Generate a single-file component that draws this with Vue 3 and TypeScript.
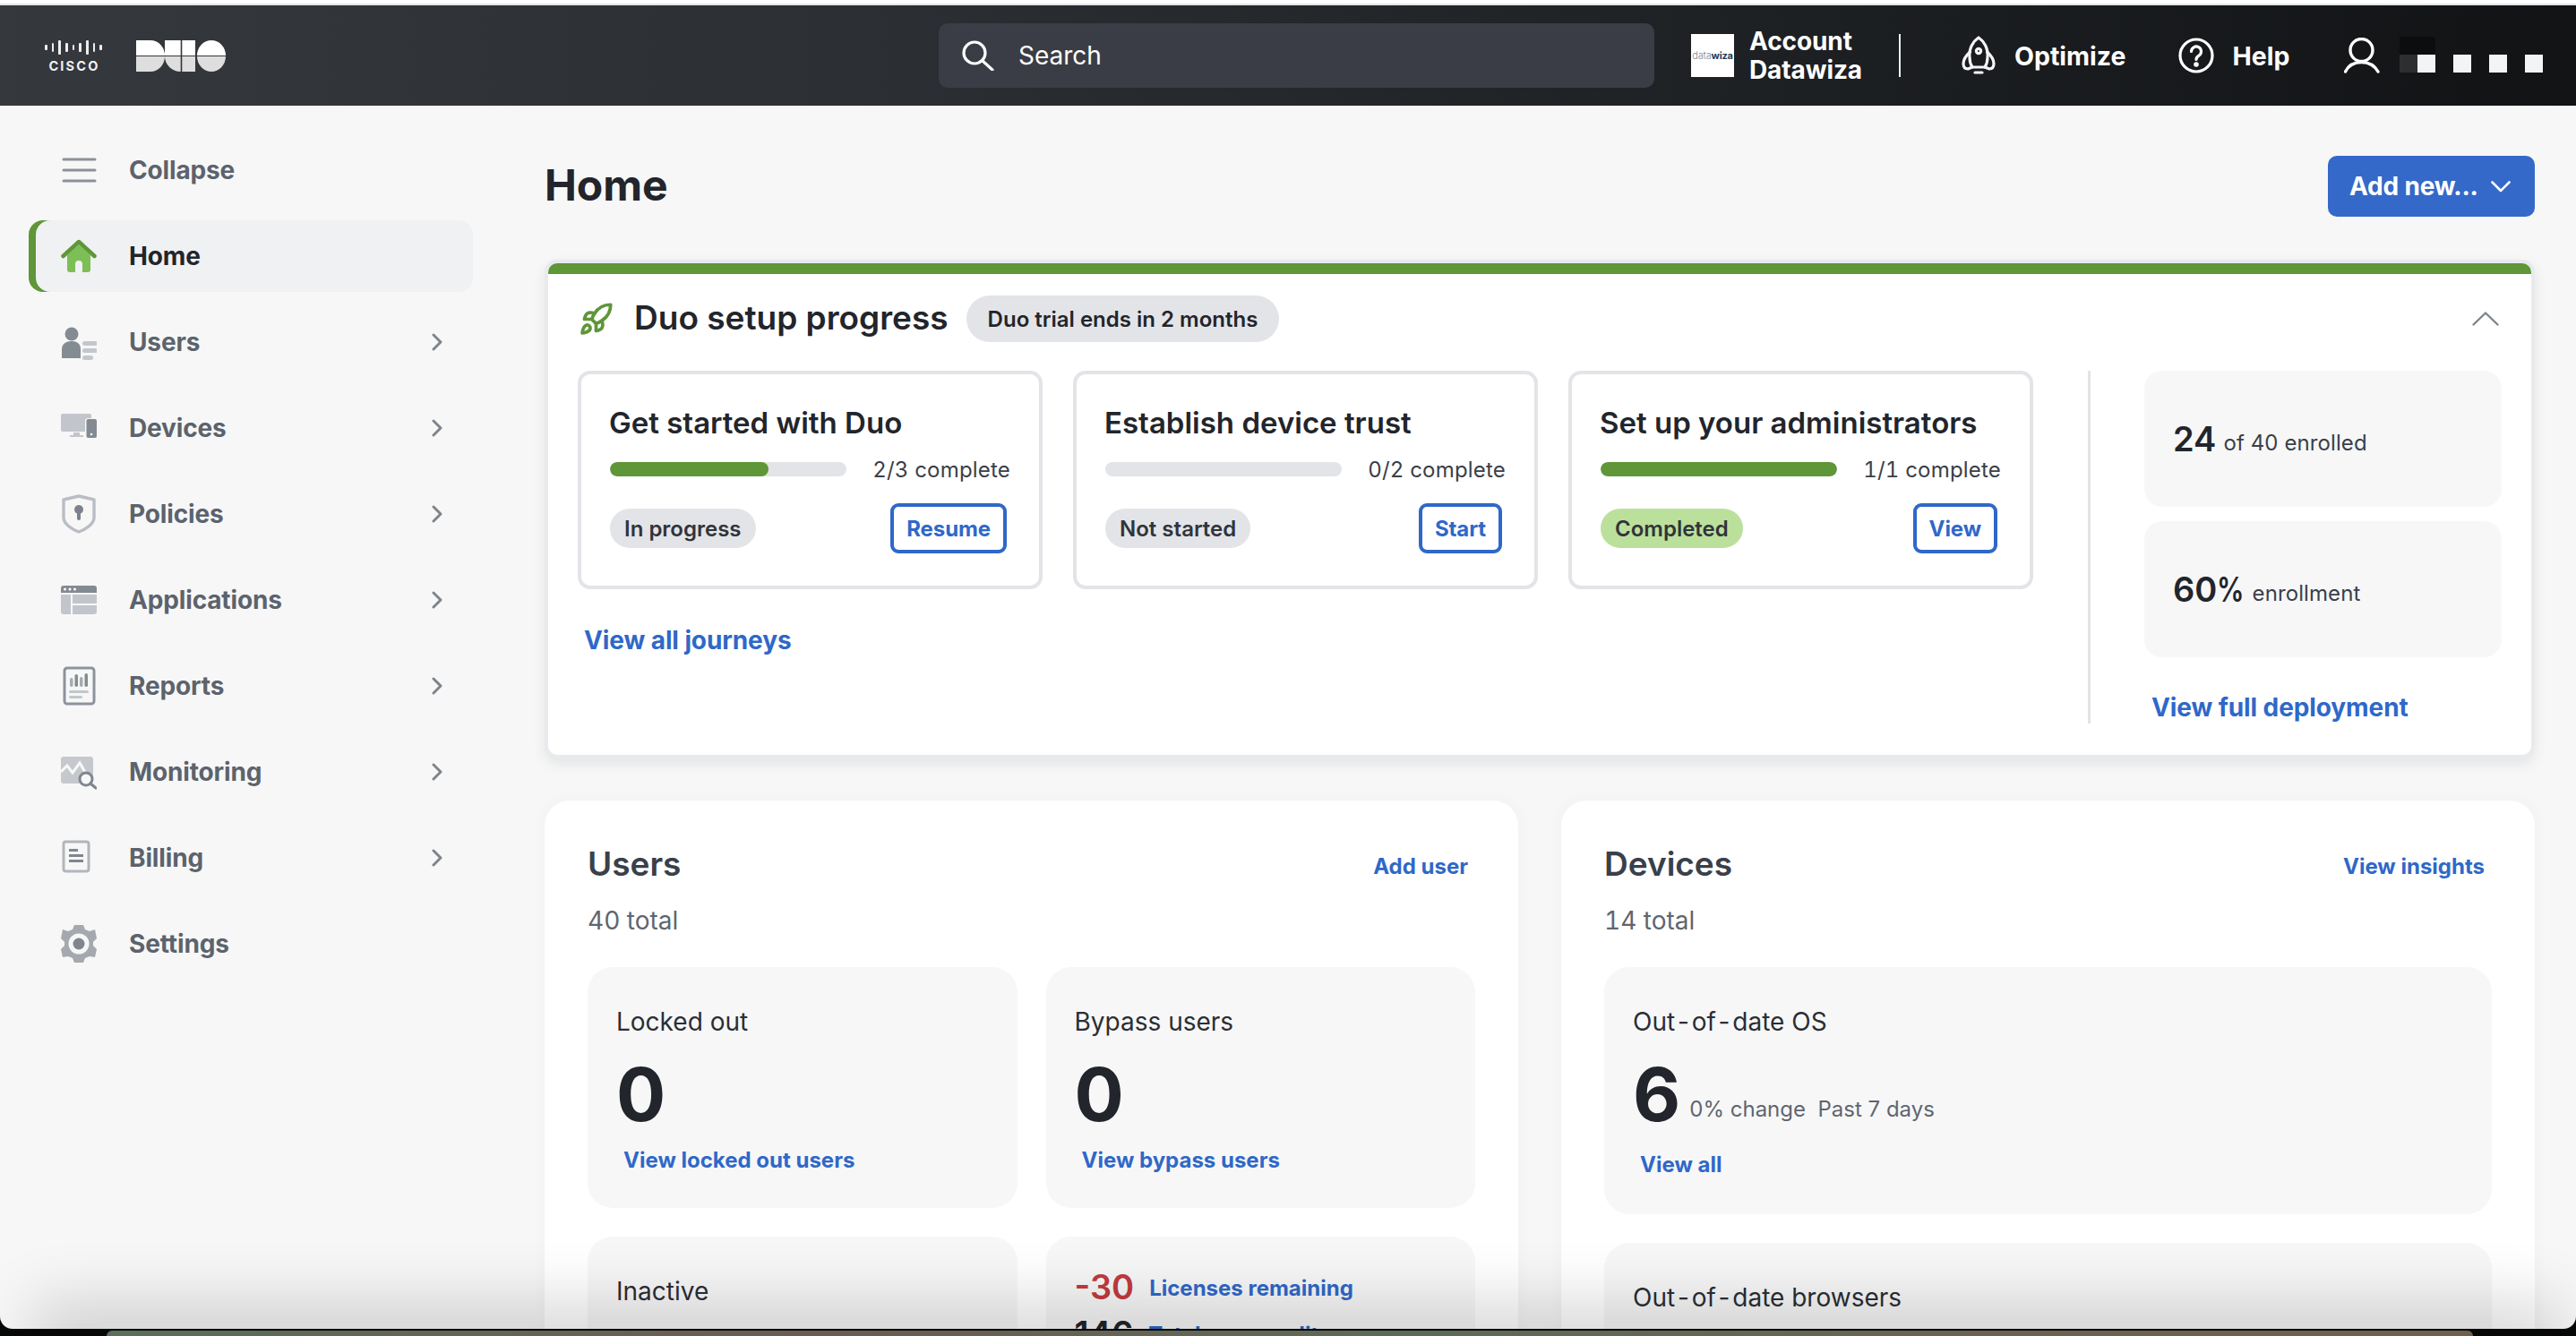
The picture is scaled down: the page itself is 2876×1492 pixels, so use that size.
<script setup lang="ts">
interface NavItem { key: string; label: string; chevron: boolean; active?: boolean }
const nav: NavItem[] = [
  { key: 'collapse', label: 'Collapse', chevron: false },
  { key: 'home', label: 'Home', chevron: false, active: true },
  { key: 'users', label: 'Users', chevron: true },
  { key: 'devices', label: 'Devices', chevron: true },
  { key: 'policies', label: 'Policies', chevron: true },
  { key: 'applications', label: 'Applications', chevron: true },
  { key: 'reports', label: 'Reports', chevron: true },
  { key: 'monitoring', label: 'Monitoring', chevron: true },
  { key: 'billing', label: 'Billing', chevron: true },
  { key: 'settings', label: 'Settings', chevron: false },
]
const journeys = [
  { title: 'Get started with Duo', pct: 67, count: '2/3 complete', status: 'In progress', action: 'Resume', done: false },
  { title: 'Establish device trust', pct: 0, count: '0/2 complete', status: 'Not started', action: 'Start', done: false },
  { title: 'Set up your administrators', pct: 100, count: '1/1 complete', status: 'Completed', action: 'View', done: true },
]
const ciscoBars = [6, 10, 16, 10, 6, 10, 16, 10, 6]
</script>

<template>
  <div class="screen">
    <div class="window">
      <header class="topbar">
        <div class="cisco">
          <div class="cisco-bars">
            <i v-for="(h, n) in ciscoBars" :key="n" :style="{ height: h + 'px' }"></i>
          </div>
          <span>CISCO</span>
        </div>
        <svg class="duo" viewBox="0 0 100 35" width="100" height="35">
          <path fill="#fff" d="M0 0H16A16 17 0 0 1 32 17H0Z" />
          <path fill="#dedede" d="M0 18H32A16 17 0 0 1 16 35H0Z" />
          <path fill="#fff" d="M32 0H49.7V17H32Z" />
          <path fill="#dedede" d="M32 18H49.7V35A17.7 17 0 0 1 32 18Z" />
          <path fill="#fff" d="M51.3 0H66V17H51.3Z" />
          <path fill="#dedede" d="M51.3 18H66V35H51.3Z" />
          <path fill="#fff" d="M68 17A16 17 0 0 1 100 17Z" />
          <path fill="#dedede" d="M68 18H100A16 17 0 0 1 68 18Z" />
        </svg>
        <div class="search">
          <svg viewBox="0 0 36 34" width="36" height="34" fill="none" stroke="#fff" stroke-width="3.2" stroke-linecap="round">
            <circle cx="14" cy="14" r="12" />
            <path d="M23 23L34 33" />
          </svg>
          <span>Search</span>
        </div>
        <div class="acct-logo"><span class="dl-a">data</span><span class="dl-b">wiza</span></div>
        <div class="acct-name">Account<br />Datawiza</div>
        <div class="top-divider"></div>
        <svg class="ico-optimize" viewBox="0 0 38 44" width="38" height="44" fill="none" stroke="#f5f5f5" stroke-width="3.2" stroke-linejoin="round" stroke-linecap="round">
          <path d="M19 2C25 6 30 14 29 24C29 28 28 32 26 35H12C10 32 9 28 9 24C8 14 13 6 19 2Z" />
          <path d="M9.5 18C5 22 2 27 2 31C2 35 4 37 7 37L12 35M28.5 18C33 22 36 27 36 31C36 35 34 37 31 37L26 35" />
          <circle cx="19" cy="17" r="2.6" />
          <path d="M15 41H23" />
        </svg>
        <span class="top-link">Optimize</span>
        <svg class="ico-help" viewBox="0 0 40 40" width="40" height="40" fill="none" stroke="#fff" stroke-width="3.2" stroke-linecap="round">
          <circle cx="20" cy="20" r="18" />
          <path d="M14.5 15.5a5.5 5.5 0 1 1 8.4 4.7c-1.9 1.2-2.9 2.3-2.9 4.3" />
          <circle cx="20" cy="30" r="1.2" fill="#fff" />
        </svg>
        <span class="top-link">Help</span>
        <svg class="ico-user" viewBox="0 0 40 40" width="40" height="40" fill="none" stroke="#fff" stroke-width="3.4" stroke-linecap="round">
          <circle cx="19.5" cy="14" r="12.5" />
          <path d="M1.5 38C5 31 12 27.5 19.5 27.5S34 31 38 38" />
        </svg>
        <div class="redact">
          <i class="smudge"></i>
          <i></i><i></i><i></i><i></i>
        </div>
      </header>

      <div class="body">
        <nav class="sidebar">
          <div v-for="item in nav" :key="item.key" class="nav-row" :class="{ active: item.active }">
            <svg class="nav-ico" viewBox="0 0 40 44" width="40" height="44">
              <g v-if="item.key === 'collapse'" fill="none" stroke="#8b9199" stroke-width="3" stroke-linecap="round">
                <path d="M3 10H38M3 22H38M3 34H38" />
              </g>
              <g v-else-if="item.key === 'home'">
                <path fill="#7dbf56" d="M7 21L20 9L33 21V37a3 3 0 0 1-3 3H24V31a4 4 0 0 0-8 0V40H10a3 3 0 0 1-3-3Z" />
                <path fill="none" stroke="#5f9638" stroke-width="4.5" stroke-linecap="round" stroke-linejoin="round" d="M2.5 22L20 6L37.5 22" />
              </g>
              <g v-else-if="item.key === 'users'">
                <circle cx="12" cy="13" r="7.5" fill="#858b93" />
                <path fill="#858b93" d="M1 40V30C1 24 6 21 12 21S22 24 22 30V40Z" />
                <rect x="24" y="21" width="17" height="5" rx="2.5" fill="#c3c7cd" />
                <rect x="24" y="29" width="17" height="5" rx="2.5" fill="#c3c7cd" />
                <rect x="24" y="37" width="12" height="5" rx="2.5" fill="#c3c7cd" />
              </g>
              <g v-else-if="item.key === 'devices'">
                <path fill="#c2c6cc" d="M2 6H32a2 2 0 0 1 2 2V11H30a3 3 0 0 0-3 3V26H2a2 2 0 0 1-2-2V8a2 2 0 0 1 2-2Z" />
                <path fill="#c2c6cc" d="M14 27H21V30H25V32H10V30H14Z" />
                <rect x="28.5" y="12" width="11.5" height="21" rx="2" fill="#848a92" />
                <circle cx="34" cy="29" r="1.3" fill="#fff" />
              </g>
              <g v-else-if="item.key === 'policies'">
                <path fill="none" stroke="#b9bdc4" stroke-width="3.4" stroke-linejoin="round" d="M20 2L37 6V26C37 33 28 39 20 42C12 39 3 33 3 26V6Z" />
                <circle cx="20" cy="17" r="5" fill="#7c828b" />
                <rect x="18" y="17" width="4" height="12" rx="2" fill="#7c828b" />
              </g>
              <g v-else-if="item.key === 'applications'">
                <path fill="#848a92" d="M3 6H37a3 3 0 0 1 3 3V14H0V9a3 3 0 0 1 3-3Z" />
                <circle cx="4.5" cy="10" r="1.5" fill="#fff" /><circle cx="10" cy="10" r="1.5" fill="#fff" /><circle cx="15.5" cy="10" r="1.5" fill="#fff" />
                <path fill="#c2c6cc" d="M0 16H11V38H3a3 3 0 0 1-3-3Z" />
                <rect x="13" y="16" width="27" height="10" fill="#c2c6cc" />
                <path fill="#c2c6cc" d="M13 28H40V35a3 3 0 0 1-3 3H13Z" />
              </g>
              <g v-else-if="item.key === 'reports'">
                <rect x="4" y="2" width="33" height="40" rx="3" fill="none" stroke="#8d939b" stroke-width="3" />
                <rect x="10" y="13" width="3.5" height="10" rx="1.7" fill="#a7acb3" />
                <rect x="15.5" y="9" width="3.5" height="14" rx="1.7" fill="#858b93" />
                <rect x="21" y="12" width="3.5" height="11" rx="1.7" fill="#a7acb3" />
                <rect x="26.5" y="8" width="3.5" height="15" rx="1.7" fill="#858b93" />
                <rect x="9" y="27" width="22" height="3" rx="1.5" fill="#c3c7cd" />
                <rect x="9" y="33" width="15" height="3" rx="1.5" fill="#c3c7cd" />
              </g>
              <g v-else-if="item.key === 'monitoring'">
                <rect x="0" y="5" width="36" height="30" rx="3" fill="#c5c9ce" />
                <path fill="none" stroke="#f8f8f8" stroke-width="3" d="M0 22L7 15L13 23L21 12L28 24" />
                <circle cx="28" cy="30" r="7" fill="#f8f8f8" stroke="#80868e" stroke-width="3" />
                <path stroke="#80868e" stroke-width="3.2" stroke-linecap="round" d="M33 35L39 40" />
              </g>
              <g v-else-if="item.key === 'billing'">
                <rect x="3" y="4" width="28" height="33" rx="2.5" fill="none" stroke="#b2b6bc" stroke-width="3" />
                <rect x="9" y="12" width="10" height="3" fill="#80868e" />
                <rect x="9" y="18" width="16" height="3" fill="#80868e" />
                <rect x="9" y="24" width="16" height="3" fill="#80868e" />
              </g>
              <g v-else-if="item.key === 'settings'">
                <path fill="#a5a9af" d="M15 1H25L27 6L32 8L38 6L40 16L36 20L36 24L40 28L38 37L32 36L27 38L25 43H15L13 38L8 36L2 37L0 28L4 24V20L0 16L2 6L8 8L13 6Z" />
                <circle cx="20" cy="22" r="11.5" fill="#f7f7f7" />
                <circle cx="20" cy="22" r="6.5" fill="#80868e" />
              </g>
            </svg>
            <span class="nav-label">{{ item.label }}</span>
            <svg v-if="item.chevron" class="nav-chev" viewBox="0 0 12 20" width="12" height="20" fill="none" stroke="#7e848c" stroke-width="3" stroke-linecap="round" stroke-linejoin="round">
              <path d="M2 2L10 10L2 18" />
            </svg>
          </div>
        </nav>

        <main class="main">
          <div class="title-row">
            <h1>Home</h1>
            <button class="add-btn">
              <span>Add new...</span>
              <svg viewBox="0 0 22 13" width="22" height="13" fill="none" stroke="#fff" stroke-width="2.6" stroke-linecap="round" stroke-linejoin="round"><path d="M1.5 1.5L11 11L20.5 1.5" /></svg>
            </button>
          </div>

          <section class="setup">
            <div class="setup-bar"></div>
            <div class="setup-head">
              <svg viewBox="0 0 24 24" width="39" height="39" fill="none" stroke="#5f9638" stroke-width="2.3" stroke-linecap="round" stroke-linejoin="round">
                <path d="M4.5 16.5c-1.5 1.26-2 5-2 5s3.74-.5 5-2c.71-.84.7-2.13-.09-2.91a2.18 2.18 0 0 0-2.91-.09z" />
                <path d="m12 15-3-3a22 22 0 0 1 2-3.95A12.88 12.88 0 0 1 22 2c0 2.72-.78 7.5-6 11a22.35 22.35 0 0 1-4 2z" />
                <path d="M9 12H4s.55-3.03 2-4c1.62-1.08 5 0 5 0" />
                <path d="M12 15v5s3.03-.55 4-2c1.08-1.62 0-5 0-5" />
              </svg>
              <h2>Duo setup progress</h2>
              <span class="trial-chip">Duo trial ends in 2 months</span>
              <svg class="collapse-up" viewBox="0 0 30 16" width="30" height="16" fill="none" stroke="#7e848c" stroke-width="2.4" stroke-linecap="round" stroke-linejoin="round"><path d="M1.5 14.5L15 1.5L28.5 14.5" /></svg>
            </div>
            <div class="setup-body">
              <div class="journeys">
                <div class="journey-row">
                  <article v-for="j in journeys" :key="j.title" class="journey">
                    <h3>{{ j.title }}</h3>
                    <div class="progress-row">
                      <div class="track"><div class="fill" :style="{ width: j.pct + '%' }"></div></div>
                      <span>{{ j.count }}</span>
                    </div>
                    <div class="journey-foot">
                      <span class="status" :class="{ done: j.done }">{{ j.status }}</span>
                      <button class="outline-btn">{{ j.action }}</button>
                    </div>
                  </article>
                </div>
                <a class="big-link all-journeys">View all journeys</a>
              </div>
              <div class="v-rule"></div>
              <aside class="enroll">
                <div class="stat"><b>24</b><span>of 40 enrolled</span></div>
                <div class="stat"><b>60<small>%</small></b><span>enrollment</span></div>
                <a class="big-link full-deploy">View full deployment</a>
              </aside>
            </div>
          </section>

          <div class="panels">
            <section class="panel">
              <div class="panel-head"><h2>Users</h2><a class="small-link head-link">Add user</a></div>
              <p class="total">40 total</p>
              <div class="tile-grid">
                <div class="tile user-tile">
                  <p class="tile-label">Locked out</p>
                  <div class="big-num">0</div>
                  <a class="small-link tile-link">View locked out users</a>
                </div>
                <div class="tile user-tile">
                  <p class="tile-label">Bypass users</p>
                  <div class="big-num">0</div>
                  <a class="small-link tile-link">View bypass users</a>
                </div>
                <div class="tile user-tile">
                  <p class="tile-label">Inactive</p>
                </div>
                <div class="tile license-tile">
                  <div class="lic-row"><b class="neg">-30</b><a class="small-link">Licenses remaining</a></div>
                  <div class="lic-row"><b>146</b><a class="small-link">Total user credits</a></div>
                </div>
              </div>
            </section>
            <section class="panel">
              <div class="panel-head"><h2>Devices</h2><a class="small-link head-link">View insights</a></div>
              <p class="total">14 total</p>
              <div class="tile-stack">
                <div class="tile device-tile">
                  <p class="tile-label">Out<span class="hy">-</span>of<span class="hy">-</span>date OS</p>
                  <div class="num-row">
                    <div class="big-num">6</div>
                    <span>0% change&nbsp; Past 7 days</span>
                  </div>
                  <a class="small-link tile-link device-link">View all</a>
                </div>
                <div class="tile device-tile">
                  <p class="tile-label">Out<span class="hy">-</span>of<span class="hy">-</span>date browsers</p>
                </div>
              </div>
            </section>
          </div>
        </main>
      </div>
      <div class="dock-shadow"></div>
    </div>
    <div class="desk-strip"></div>
  </div>
</template>

<style>
html, body { margin: 0; background: #000; }
</style>

<style scoped>
* { box-sizing: border-box; }
.screen {
  width: 2876px; height: 1492px; background: #060808; overflow: hidden;
  font-family: Inter, "Noto Sans", sans-serif; color: #22252b;
}
.window {
  position: relative; height: 1484px; background: #f7f7f7; overflow: hidden;
  border-radius: 0 0 14px 14px; display: flex; flex-direction: column; border-top: 4px solid #fff;
}
.desk-strip {
  height: 6px; margin: 2px 115px 0 119px; border-radius: 12px 12px 0 0;
  background: linear-gradient(90deg, #5b6e5c, #6b5c52 30%, #5d6a58 55%, #70604f 90%);
}
.topbar {
  height: 114px; flex: none; border-top: 2px solid #e4e4e4; display: flex; align-items: center;
  padding-left: 50px; color: #fff; background: linear-gradient(90deg, #35383d, #2b2e32 35%, #111315);
}
.cisco { width: 64px; display: flex; flex-direction: column; align-items: center; gap: 7px; }
.cisco-bars { width: 64px; height: 16px; display: flex; align-items: center; justify-content: space-between; }
.cisco-bars i { width: 2.6px; background: #eee; border-radius: 1px; }
.cisco span { font-size: 14.5px; line-height: 11px; font-weight: 700; letter-spacing: 2.2px; margin-right: -2px; color: #f0f0f0; }
.duo { margin-left: 38px; flex: none; }
.search {
  margin-left: 796px; width: 799px; height: 72px; flex: none; border-radius: 10px; background: #3a3d45;
  display: flex; align-items: center; gap: 27px; padding-left: 26px; font-size: 28px;
}
.acct-logo {
  margin-left: 41px; width: 48px; height: 48px; flex: none; background: #fff; display: flex;
  align-items: center; justify-content: center; font-size: 11px; letter-spacing: -.2px;
}
.dl-a { color: #7b8a99; font-weight: 300; }
.dl-b { color: #1f3c5c; font-weight: 700; }
.acct-name { margin-left: 17px; width: 126px; font-size: 28px; line-height: 32px; font-weight: 700; white-space: nowrap; letter-spacing: -.1px; }
.top-divider { margin-left: 41px; width: 2px; height: 48px; background: #eee; flex: none; }
.ico-optimize { margin-left: 68px; flex: none; }
.top-link { font-size: 28.5px; font-weight: 700; margin-left: 21px; white-space: nowrap; }
.ico-help { margin-left: 58px; flex: none; }
.ico-user { margin-left: 60px; flex: none; }
.redact { position: relative; margin-left: 22px; height: 20px; margin-top: 18px; display: flex; gap: 20px; }
.redact i { width: 20px; height: 20px; background: #f3f4f6; }
.redact .smudge { background: #2c2e30; margin-right: -20px; }
.redact .smudge::before { content: ""; position: absolute; left: 0; top: -20px; width: 40px; height: 20px; background: #0c0d0f; }

.body { flex: 1; min-height: 0; display: flex; }
.sidebar { width: 608px; flex: none; padding: 32px 0 0 32px; display: flex; flex-direction: column; gap: 16px; }
.nav-row {
  width: 496px; height: 80px; flex: none; border-radius: 16px; display: flex; align-items: center;
  padding-left: 36px; padding-right: 34px; font-size: 28px; font-weight: 700; color: #5c636d;
}
.nav-row.active { background: #f0f1f3; color: #22252b; box-shadow: inset 8px 0 0 #5f9638; }
.nav-ico { flex: none; }
.nav-label { margin-left: 36px; letter-spacing: -.15px; }
.nav-chev { margin-left: auto; }

.main { flex: 1; min-width: 0; padding: 56px 46px 0 0; }
.title-row { height: 68px; display: flex; justify-content: space-between; align-items: center; }
h1 { margin: -2px 0 0 0; font-size: 48px; line-height: 68px; font-weight: 700; }
.add-btn {
  height: 68px; width: 231px; border: 0; border-radius: 10px; background: #3469c9; color: #fff;
  font: 700 28px Inter, sans-serif; display: flex; align-items: center; padding: 0 0 0 24px; gap: 14px; letter-spacing: -.2px;
}

.setup {
  margin-top: 48px; border: 4px solid #e9eaed; border-radius: 14px; background: #fff; overflow: hidden;
  box-shadow: 0 6px 14px rgba(60, 65, 80, .10); height: 557px;
}
.setup-bar { height: 12px; background: #5f9638; }
.setup-head { height: 76px; padding: 24px 36px 0 34px; display: flex; align-items: center; }
.setup-head h2 { margin: -3px 0 0 23px; font-size: 37px; line-height: 52px; font-weight: 600; white-space: nowrap; }
.trial-chip {
  margin-left: 20px; height: 52px; padding: 0 24px; border-radius: 26px; background: #e3e4e8;
  display: flex; align-items: center; font-size: 24px; font-weight: 600; white-space: nowrap;
}
.collapse-up { margin-left: auto; }
.setup-body { margin-top: 32px; padding: 0 32px 0 33px; display: flex; height: 394px; }
.journeys { width: 1624px; flex: none; }
.journey-row { display: grid; grid-template-columns: repeat(3, 519px); column-gap: 34px; }
.journey { height: 244px; border: 4px solid #e3e4e8; border-radius: 14px; padding: 32px 32px 0; }
.journey h3 { margin: 0 0 0 -1px; font-size: 33px; line-height: 44px; font-weight: 600; white-space: nowrap; }
.progress-row {
  margin-top: 14px; height: 32px; display: flex; align-items: center; justify-content: space-between;
  font-size: 24px; letter-spacing: .2px; color: #3b4048; white-space: nowrap; font-variant-numeric: tabular-nums;
}
.track { width: 264px; height: 16px; border-radius: 8px; background: #e3e4e8; overflow: hidden; }
.fill { height: 100%; border-radius: 8px; background: #5f9638; }
.journey-foot { margin-top: 22px; height: 56px; display: flex; justify-content: space-between; align-items: center; padding-right: 4px; }
.status { height: 44px; padding: 0 16px; border-radius: 22px; background: #e3e4e8; display: flex; align-items: center; font-size: 24px; font-weight: 600; color: #30343b; }
.status.done { background: #bbe09b; }
.outline-btn {
  height: 56px; padding: 0 14px; background: #fff; border: 4px solid #2f68c8; border-radius: 9px;
  color: #2f68c8; font: 700 24px Inter, sans-serif; letter-spacing: -.1px;
}
.big-link { display: block; color: #2f68c8; font-size: 28px; line-height: 40px; font-weight: 700; white-space: nowrap; letter-spacing: -.1px; }
.all-journeys { margin: 37px 0 0 7px; }
.v-rule { margin-left: 62px; width: 3px; background: #e3e4e8; flex: none; }
.enroll { margin-left: 60px; width: 399px; flex: none; display: flex; flex-direction: column; gap: 16px; }
.stat { height: 152px; flex: none; border-radius: 20px; background: #f7f7f7; padding-left: 32px; display: flex; align-items: center; gap: 8px; }
.stat b { font-size: 38px; font-weight: 600; }
.stat small { display: inline-block; font-size: 38px; font-weight: 600; transform: scaleX(.8); transform-origin: left; margin-right: -7px; }
.stat span { font-size: 24px; letter-spacing: .1px; color: #3b4048; margin-top: 8px; }
.full-deploy { margin: 20px 0 0 8px; }

.panels { margin-top: 47px; display: grid; grid-template-columns: 1fr 1fr; gap: 48px; }
.panel { height: 700px; border-radius: 28px; background: #fff; padding: 48px 48px 0; box-shadow: 0 0 18px rgba(60, 65, 80, .04); }
.panel-head { height: 48px; display: flex; justify-content: space-between; align-items: center; }
.panel-head h2 { margin: -2px 0 0 0; font-size: 37px; line-height: 48px; font-weight: 600; color: #39404a; }
.small-link { color: #2f68c8; font-size: 24px; line-height: 36px; font-weight: 700; white-space: nowrap; }
.head-link { margin: 4px 8px 0 0; }
.total { margin: 18px 0 32px 0; font-size: 28px; line-height: 40px; color: #5f6670; font-variant-numeric: tabular-nums; }
.tile-grid { display: grid; grid-template-columns: 1fr 1fr; gap: 32px; }
.tile-stack { display: flex; flex-direction: column; gap: 32px; }
.tile { border-radius: 28px; background: #f7f7f7; }
.user-tile { height: 269px; padding: 41px 32px 0; }
.device-tile { height: 276px; padding: 41px 32px 0; }
.tile-label { margin: 0; font-size: 28px; line-height: 40px; color: #2b2e34; }
.hy { padding: 0 2.8px; }
.big-num { margin-top: 22px; font-size: 82px; line-height: 80px; font-weight: 700; }
.tile-link { display: block; margin: 15px 0 0 8px; }
.num-row { display: flex; align-items: flex-end; gap: 10px; }
.num-row span { font-size: 24px; line-height: 30px; padding-bottom: 9px; color: #5f6670; white-space: nowrap; }
.device-link { margin-top: 20px; }
.license-tile { height: 269px; padding: 30px 32px 0; }
.lic-row { height: 52px; display: flex; align-items: center; gap: 17px; }
.lic-row a { margin-top: 4px; }
.lic-row b { font-size: 38px; line-height: 52px; font-weight: 600; }
.lic-row b.neg { color: #c13b3e; }
.dock-shadow {
  position: absolute; left: 60px; right: 40px; bottom: -30px; height: 30px;
  box-shadow: 0 -6px 70px 24px rgba(0, 0, 0, .16); pointer-events: none;
}
</style>
